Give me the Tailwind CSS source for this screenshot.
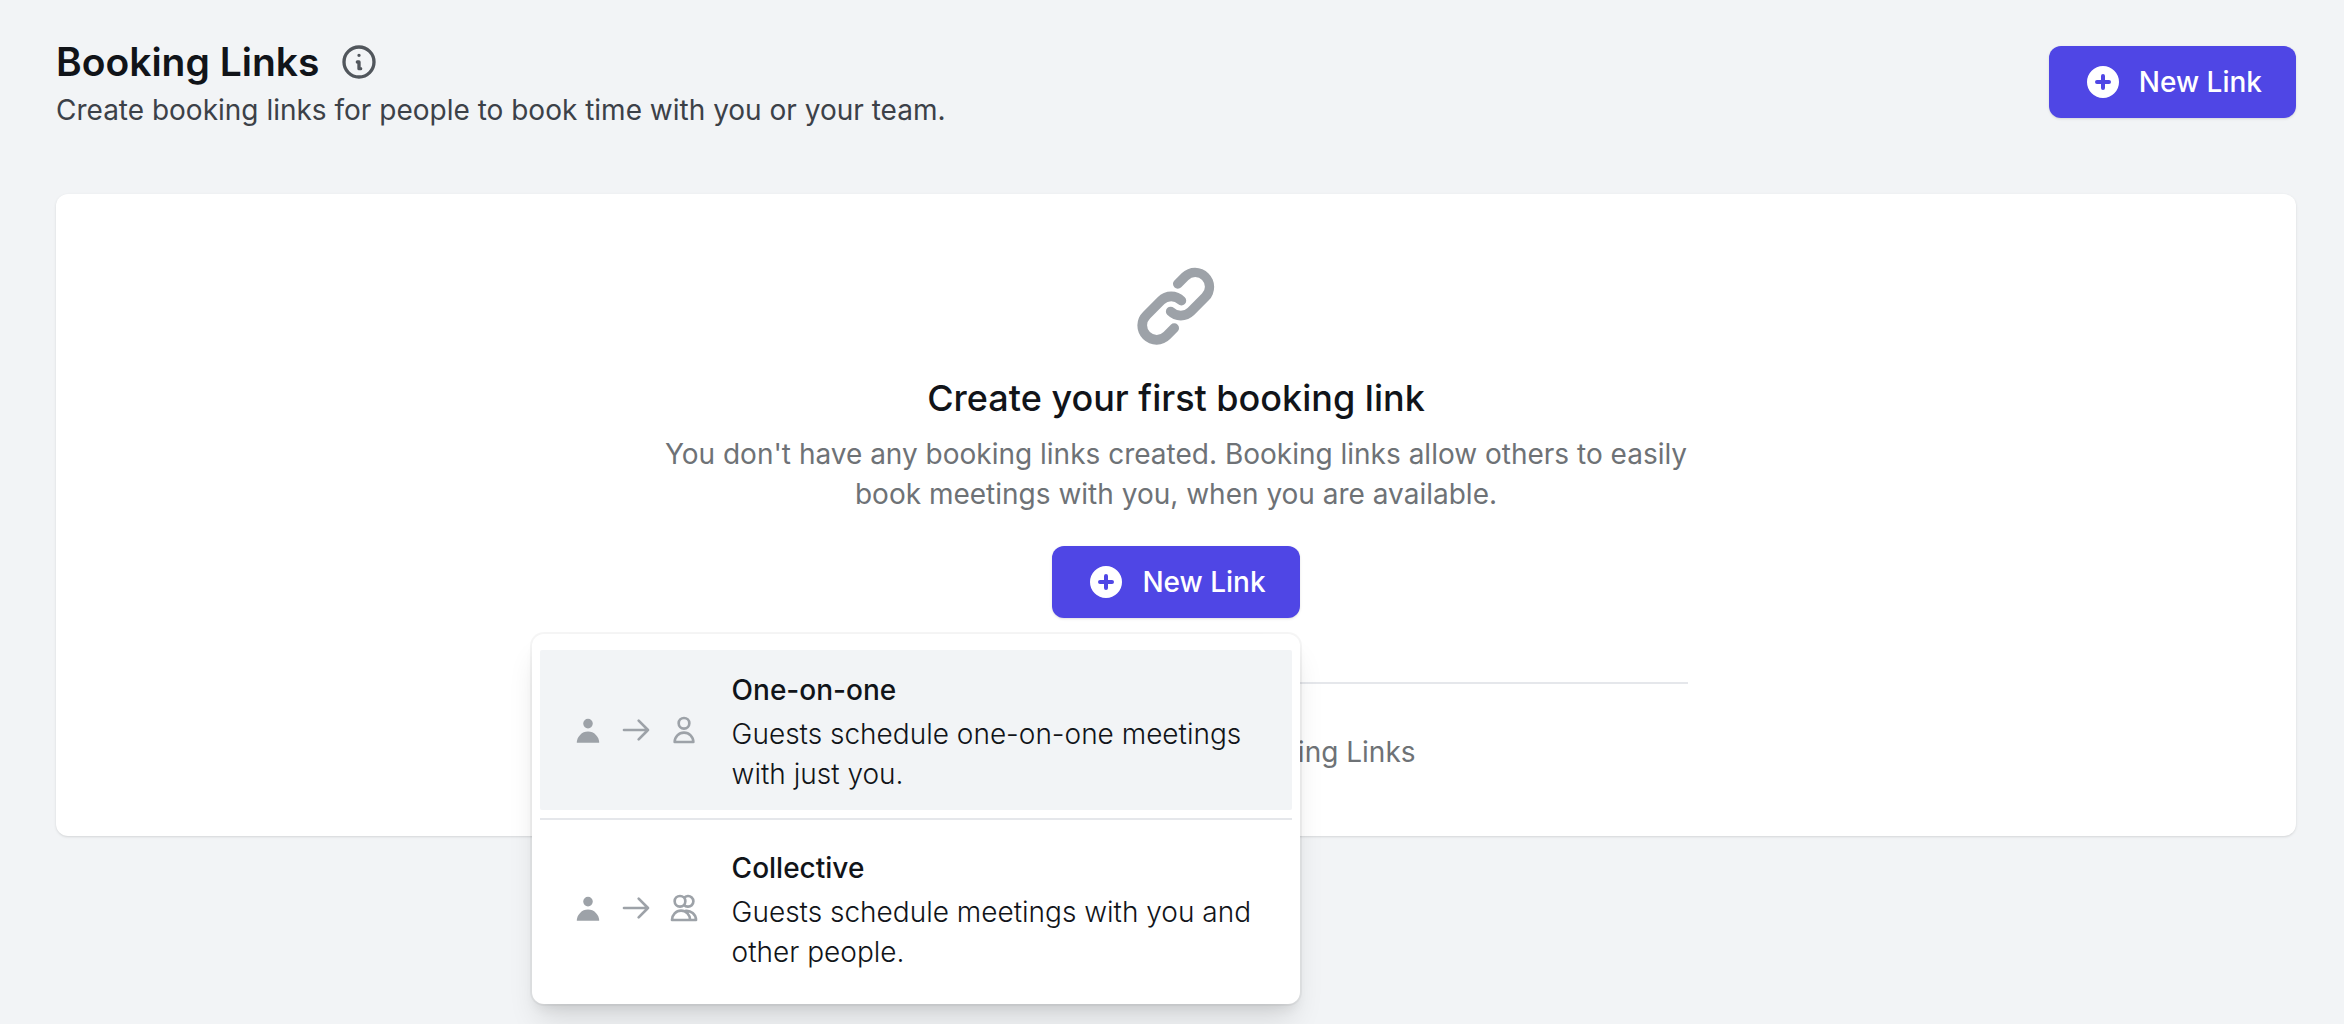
<!DOCTYPE html>
<html lang="en">
<head>
<meta charset="utf-8">
<meta name="viewport" content="width=device-width, initial-scale=1">
<title>Booking Links</title>
<script src="https://cdn.jsdelivr.net/npm/@tailwindcss/browser@4"></script>
</head>
<body class="min-h-screen bg-[#f2f4f6] font-['Inter',sans-serif] text-[28px] leading-10 text-[#111419]">
<svg class="hidden" aria-hidden="true">
  <symbol id="plus-circle" viewBox="0 0 20 20"><path fill="currentColor" fill-rule="evenodd" d="M10 18a8 8 0 100-16 8 8 0 000 16zm1-11a1 1 0 10-2 0v2H7a1 1 0 100 2h2v2a1 1 0 102 0v-2h2a1 1 0 100-2h-2V7z"/></symbol>
  <symbol id="user-solid" viewBox="0 0 20 20"><path fill="currentColor" d="M10 9a3 3 0 100-6 3 3 0 000 6zm-7 9a7 7 0 1114 0H3z"/></symbol>
  <symbol id="arrow-right" viewBox="0 0 24 24"><path fill="none" stroke="currentColor" stroke-width="2" stroke-linecap="round" stroke-linejoin="round" d="M14 5l7 7m0 0l-7 7m7-7H3"/></symbol>
</svg>
<main class="pt-[38px] pr-12 pb-5 pl-14">
  <header class="flex items-start justify-between">
    <div>
      <div class="flex items-center gap-5 pt-1">
        <h1 class="text-[39px] leading-10 font-semibold">Booking Links</h1>
        <button type="button" aria-label="About booking links" class="text-[#51565c]">
          <svg class="size-10" viewBox="0 0 24 24" fill="none" stroke="currentColor" stroke-width="2" stroke-linecap="round" stroke-linejoin="round"><path d="M13 16h-1v-4h-1m1-4h.01M21 12a9 9 0 11-18 0 9 9 0 0118 0z"/></svg>
        </button>
      </div>
      <p class="mt-2 text-[#3c4148]">Create booking links for people to book time with you or your team.</p>
    </div>
    <button type="button" class="mt-2 flex h-[72px] items-center gap-4 rounded-xl bg-[#4f46e5] px-[34px] font-medium text-white shadow-sm">
      <svg class="size-10"><use href="#plus-circle"/></svg>
      New Link
    </button>
  </header>

  <section class="mt-16 rounded-xl bg-white py-16 shadow">
    <div class="mx-auto flex max-w-[1024px] flex-col items-center text-center">
      <svg class="size-24 text-[#9da2a8]" viewBox="0 0 20 20" fill="currentColor"><path fill-rule="evenodd" d="M12.586 4.586a2 2 0 112.828 2.828l-3 3a2 2 0 01-2.828 0 1 1 0 00-1.414 1.414 4 4 0 005.656 0l3-3a4 4 0 00-5.656-5.656l-1.5 1.5a1 1 0 101.414 1.414l1.5-1.5zm-5 5a2 2 0 012.828 0 1 1 0 101.414-1.414 4 4 0 00-5.656 0l-3 3a4 4 0 105.656 5.656l1.5-1.5a1 1 0 10-1.414-1.414l-1.5 1.5a2 2 0 11-2.828-2.828l3-3z"/></svg>
      <h2 class="mt-4 text-[36px] leading-14 font-medium">Create your first booking link</h2>
      <p class="mt-2 text-[#6e7276]">You don't have any booking links created. Booking links allow others to easily book meetings with you, when you are available.</p>
      <div class="relative mt-8">
        <button type="button" aria-haspopup="menu" aria-expanded="true" class="flex h-[72px] items-center gap-4 rounded-xl bg-[#4f46e5] px-[34px] font-medium text-white shadow-sm">
          <svg class="size-10"><use href="#plus-circle"/></svg>
          New Link
        </button>
        <div role="menu" class="absolute top-full right-0 mt-4 w-[768px] divide-y-2 divide-gray-200 rounded-xl bg-white px-2 py-2 text-left shadow-[0_20px_30px_-6px_rgba(0,0,0,0.12),0_8px_12px_-4px_rgba(0,0,0,0.08),0_0_0_2px_rgba(0,0,0,0.04)]">
          <div class="py-2">
            <button type="button" role="menuitem" class="flex w-full items-center gap-8 rounded-xs bg-[#f2f4f6] px-8 pt-5 pb-4 text-left">
              <span class="flex gap-4 pb-1 text-[#9da2a8]">
                <svg class="size-8"><use href="#user-solid"/></svg>
                <svg class="size-8"><use href="#arrow-right"/></svg>
                <svg class="size-8" viewBox="0 0 24 24" fill="none" stroke="currentColor" stroke-width="2" stroke-linejoin="round"><path d="M16 7a4 4 0 11-8 0 4 4 0 018 0zM12 14a7 7 0 00-7 7h14a7 7 0 00-7-7z"/></svg>
              </span>
              <span class="flex flex-1 flex-col gap-1">
                <span class="font-medium">One-on-one</span>
                <span class="font-light">Guests schedule one-on-one meetings with just you.</span>
              </span>
            </button>
          </div>
          <div class="py-2">
            <button type="button" role="menuitem" class="flex w-full items-center gap-8 rounded-xs px-8 pt-5 pb-4 text-left">
              <span class="flex gap-4 pb-1 text-[#9da2a8]">
                <svg class="size-8"><use href="#user-solid"/></svg>
                <svg class="size-8"><use href="#arrow-right"/></svg>
                <svg class="size-8" viewBox="0 0 24 24" fill="none" stroke="currentColor" stroke-width="2" stroke-linejoin="round"><circle cx="9" cy="7" r="4"/><path d="M12 4.4a4 4 0 110 5.2M9.8 14A6.8 7 0 003 21h13.6a6.8 7 0 00-6.8-7zM13 14.2A7 7 0 0121 21h-4.4"/></svg>
              </span>
              <span class="flex flex-1 flex-col gap-1">
                <span class="font-medium">Collective</span>
                <span class="font-light">Guests schedule meetings with you and other people.</span>
              </span>
            </button>
          </div>
        </div>
      </div>
      <hr class="mt-16 w-full border-t-2 border-gray-200">
      <a href="#" class="mt-12 text-[#6e7276]">Learn more about our Booking Links</a>
    </div>
  </section>
</main>
</body>
</html>
